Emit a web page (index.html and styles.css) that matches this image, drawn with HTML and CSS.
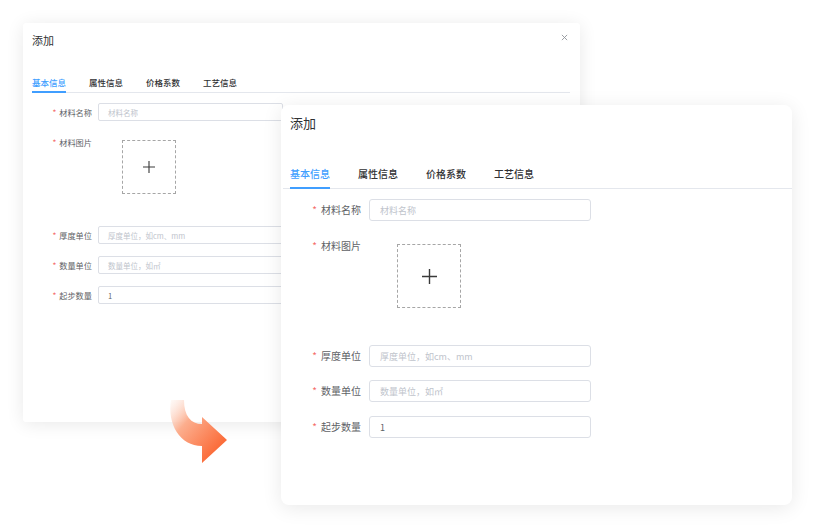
FILE: index.html
```html
<!DOCTYPE html>
<html lang="zh-CN">
<head>
<meta charset="utf-8">
<title>添加</title>
<link rel="stylesheet" href="styles.css">
</head>
<body>
<div class="stage">
  <div class="dlg dlg-a">
    <div class="dlg-head">
      <div class="dlg-title">添加</div>
      <svg class="close" viewBox="0 0 8 8" width="7" height="7"><path d="M1 1L7 7M7 1L1 7" stroke="#909399" stroke-width="1" fill="none"/></svg>
    </div>
    <div class="tabs">
      <div class="tab active">基本信息</div>
      <div class="tab">属性信息</div>
      <div class="tab">价格系数</div>
      <div class="tab">工艺信息</div>
    </div>
    <div class="form">
      <div class="row r1"><div class="label"><span class="req">*</span>材料名称</div><div class="input ph">材料名称</div></div>
      <div class="row r2"><div class="label"><span class="req">*</span>材料图片</div>
        <div class="upload"><svg viewBox="0 0 14 14" width="12" height="12"><path d="M7 0V14M0 7H14" stroke="#3a3a3a" stroke-width="1.3" fill="none"/></svg></div>
      </div>
      <div class="row r3"><div class="label"><span class="req">*</span>厚度单位</div><div class="input ph">厚度单位，如cm、mm</div></div>
      <div class="row r4"><div class="label"><span class="req">*</span>数量单位</div><div class="input ph">数量单位，如㎡</div></div>
      <div class="row r5"><div class="label"><span class="req">*</span>起步数量</div><div class="input val">1</div></div>
    </div>
  </div>

  <svg class="arrow" viewBox="0 0 80 80" width="80" height="80">
    <defs>
      <linearGradient id="ag" x1="12" y1="8" x2="62" y2="52" gradientUnits="userSpaceOnUse">
        <stop offset="0" stop-color="#fde9e0" stop-opacity="0.25"/>
        <stop offset="0.4" stop-color="#fcae8e"/>
        <stop offset="1" stop-color="#fb6e3c"/>
      </linearGradient>
    </defs>
    <path d="M11 10 C7 34 20 56 42 56 L42 73 L67 50 L42 27 L42 34 C31 34 24 26 24 10 Z" fill="url(#ag)"/>
  </svg>

  <div class="dlg dlg-b">
    <div class="dlg-head">
      <div class="dlg-title">添加</div>
    </div>
    <div class="tabs">
      <div class="tab active">基本信息</div>
      <div class="tab">属性信息</div>
      <div class="tab">价格系数</div>
      <div class="tab">工艺信息</div>
    </div>
    <div class="form">
      <div class="row r1"><div class="label"><span class="req">*</span>材料名称</div><div class="input ph">材料名称</div></div>
      <div class="row r2"><div class="label"><span class="req">*</span>材料图片</div>
        <div class="upload"><svg viewBox="0 0 14 14" width="15" height="15"><path d="M7 0V14M0 7H14" stroke="#3a3a3a" stroke-width="1.3" fill="none"/></svg></div>
      </div>
      <div class="row r3"><div class="label"><span class="req">*</span>厚度单位</div><div class="input ph">厚度单位，如cm、mm</div></div>
      <div class="row r4"><div class="label"><span class="req">*</span>数量单位</div><div class="input ph">数量单位，如㎡</div></div>
      <div class="row r5"><div class="label"><span class="req">*</span>起步数量</div><div class="input val">1</div></div>
    </div>
  </div>
</div>
</body>
</html>
```

FILE: styles.css
```css
* { box-sizing: border-box; }
html, body { margin: 0; padding: 0; background: #fff; }
body {
  font-family: "Noto Sans CJK SC", "Noto Sans", sans-serif;
  color: #303133;
}
.stage {
  position: relative;
  width: 816px;
  height: 529px;
  overflow: hidden;
  background: #fff;
}
.dlg {
  position: absolute;
  background: #fff;
}
.dlg-a {
  left: 23px;
  top: 23px;
  width: 557px;
  height: 399px;
  border-radius: 3px;
  box-shadow: 0 2px 18px rgba(0, 0, 0, 0.09);
  z-index: 1;
}
.dlg-b {
  left: 281px;
  top: 105px;
  width: 511px;
  height: 400px;
  border-radius: 8px;
  box-shadow: 0 3px 20px rgba(0, 0, 0, 0.09);
  z-index: 3;
}
.arrow {
  position: absolute;
  left: 160px;
  top: 390px;
  z-index: 2;
}
.dlg-head {
  display: flex;
  justify-content: space-between;
  align-items: flex-start;
}
.dlg-title { color: #303133; }
.tabs {
  display: flex;
  border-bottom: 1px solid #e4e7ed;
}
.tab {
  font-weight: 500;
  color: #303133;
  border-bottom: 2px solid transparent;
  margin-bottom: -1px;
}
.tab.active {
  color: #409eff;
  border-bottom-color: #409eff;
}
.form { display: flex; flex-direction: column; }
.row { display: flex; align-items: flex-start; }
.label {
  color: #606266;
  text-align: right;
  flex: none;
  white-space: nowrap;
}
.req { color: #f56c6c; }
.input {
  flex: none;
  background: #fff;
  border: 1px solid #dcdfe6;
  display: flex;
  align-items: center;
  white-space: nowrap;
}
.input.ph { color: #c0c4cc; }
.input.val { color: #606266; }
.upload {
  flex: none;
  border: 1px dashed #a6a6a6;
  display: flex;
  align-items: center;
  justify-content: center;
}

/* ---------- small dialog ---------- */
.dlg-a .dlg-head { padding: 10px 12px 0 9px; }
.dlg-a .dlg-title { font-size: 11px; line-height: 14px; }
.dlg-a .close { margin-top: 1px; }
.dlg-a .tabs { margin: 29px 10px 0 9px; gap: 23px; }
.dlg-a .tab { font-size: 8.5px; line-height: 12px; padding-bottom: 3px; }
.dlg-a .form { padding: 10px 0 0 9px; }
.dlg-a .label { width: 60px; font-size: 8.2px; line-height: 18px; margin-right: 6px; }
.dlg-a .req { margin-right: 3px; }
.dlg-a .input { width: 185px; height: 18px; border-radius: 2px; padding-left: 9px; font-size: 7.5px; }
.dlg-a .r2 { margin-top: 12px; }
.dlg-a .r3 { margin-top: 32px; }
.dlg-a .r4, .dlg-a .r5 { margin-top: 12px; }
.dlg-a .upload { width: 54px; height: 54px; margin: 7px 0 0 24px; }

/* ---------- large dialog ---------- */
.dlg-b .dlg-head { padding: 10px 12px 0 9px; }
.dlg-b .dlg-title { font-size: 13px; line-height: 16px; }
.dlg-b .tabs { margin: 36px 0 0 2px; padding-left: 7px; gap: 28px; }
.dlg-b .tab { font-size: 10px; line-height: 14px; padding-bottom: 6px; }
.dlg-b .form { padding: 10px 0 0 9px; }
.dlg-b .label { width: 71px; font-size: 10px; line-height: 22px; margin-right: 8px; }
.dlg-b .req { margin-right: 4px; }
.dlg-b .input { width: 222px; height: 22px; border-radius: 3px; padding-left: 10px; font-size: 9px; }
.dlg-b .r2 { margin-top: 14px; }
.dlg-b .r3 { margin-top: 37px; }
.dlg-b .r4 { margin-top: 13px; }
.dlg-b .r5 { margin-top: 14px; }
.dlg-b .upload { width: 64px; height: 64px; margin: 9px 0 0 28px; }
```
